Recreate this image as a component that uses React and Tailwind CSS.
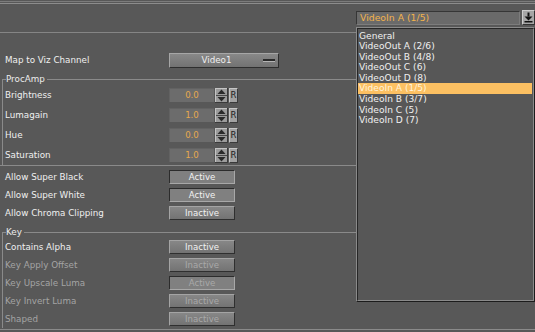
import React from 'react';

const items = [
    'General',
    'VideoOut A (2/6)',
    'VideoOut B (4/8)',
    'VideoOut C (6)',
    'VideoOut D (8)',
    'VideoIn A (1/5)',
    'VideoIn B (3/7)',
    'VideoIn C (5)',
    'VideoIn D (7)',
];

const Label = ({ children, dim, inset }) => (
    <div
        className={`${inset ? 'w-[166px] pl-[2px]' : 'w-[169px] pl-[5px]'} text-[8.75px] leading-none whitespace-nowrap ${
            dim ? 'text-[#a4a4a4]' : 'text-[#f0f0f0]'
        }`}
    >
        {children}
    </div>
);

const Toggle = ({ label, active, disabled }) => {
    const look = active
        ? 'border-t-[#2c2c2c] border-l-[#2c2c2c] border-b-[#a8a8a8] border-r-[#a8a8a8] bg-[#808080]'
        : 'border-t-[#a4a4a4] border-l-[#a4a4a4] border-b-[#2f2f2f] border-r-[#2f2f2f] bg-linear-to-b from-[#878787] to-[#737373]';
    return (
        <div
            className={`w-[66px] h-[14px] flex items-center justify-center border text-[8.6px] leading-none ${look} ${
                disabled ? 'text-[#a9a9a9]' : 'text-[#f2f2f2]'
            }`}
        >
            {label}
        </div>
    );
};

const Spinner = () => (
    <svg width="13" height="15" viewBox="0 0 13 15">
        <rect x="0" y="0" width="13" height="15" fill="#9c9c9c" />
        <rect x="0.5" y="0.5" width="12" height="14" fill="none" stroke="#c4c4c4" />
        <line x1="0" y1="14.5" x2="13" y2="14.5" stroke="#3a3a3a" />
        <line x1="12.5" y1="0" x2="12.5" y2="15" stroke="#3a3a3a" />
        <polygon points="6.5,1.5 2.5,6 10.5,6" fill="#2a2a2a" />
        <line x1="1" y1="7.5" x2="12" y2="7.5" stroke="#4a4a4a" />
        <polygon points="2.5,9 10.5,9 6.5,13.5" fill="#2a2a2a" />
    </svg>
);

const SpinRow = ({ label, value }) => (
    <div className="flex items-center h-[20px]">
        <Label inset>{label}</Label>
        <div className="flex items-center gap-px">
            <div className="w-[45px] h-[14px] bg-[#6c6c6c] border-t border-l border-[#626262] text-[8.6px] leading-[13px] text-center text-[#e6a84c]">
                {value}
            </div>
            <Spinner />
            <div className="w-[9px] h-[15px] bg-[#a2a2a2] border-t border-l border-[#c6c6c6] border-b-[#3a3a3a] border-r border-r-[#3a3a3a] border-b text-[8.5px] leading-[13px] text-center text-[#202020]">
                R
            </div>
        </div>
    </div>
);

const ToggleRow = ({ label, value, active, disabled, inset }) => (
    <div className="flex items-center h-[18px]">
        <Label dim={disabled} inset={inset}>
            {label}
        </Label>
        <Toggle label={value} active={active} disabled={disabled} />
    </div>
);

const Group = ({ title, children }) => (
    <fieldset className="ml-[2px] border-t border-l border-[#8a8a8a]">
        <legend className="ml-[3px] pr-[2px] text-[8.75px] leading-[11px] text-[#ececec]">{title}</legend>
        {children}
    </fieldset>
);

const App = () => {
    return (
        <div className="relative w-[535px] h-[332px] overflow-hidden bg-[#585858] font-['DejaVu_Sans',Verdana,sans-serif] flex flex-col">
            {/* top rules */}
            <div className="h-px mt-px bg-[#7c7c7c]" />
            <div className="h-px mt-px bg-[#8c8c8c]" />

            {/* channel selector */}
            <div className="h-[28px] pt-[6px] flex justify-end items-start gap-[2px]">
                <div className="w-[164px] h-[14px] mt-px bg-[#6a6a6a] border border-t-[#363636] border-l-[#363636] border-b-[#7c7c7c] border-r-[#7c7c7c] pl-[3px] text-[9.3px] leading-[12px] text-[#f2b24c]">
                    VideoIn A (1/5)
                </div>
                <div className="w-[13px] h-[15px] bg-[#a6a6a6] border border-t-[#cdcdcd] border-l-[#cdcdcd] border-b-[#333] border-r-[#333] flex items-center justify-center">
                    <svg width="9" height="11" viewBox="0 0 9 11">
                        <rect x="3.5" y="0.5" width="2" height="4" fill="#111" />
                        <polygon points="0.5,4.5 8.5,4.5 4.5,8.5" fill="#111" />
                        <rect x="0.5" y="9" width="8" height="1.5" fill="#111" />
                    </svg>
                </div>
            </div>
            <div className="h-px bg-[#858585]" />

            {/* map to viz channel */}
            <div className="mt-[20px] h-[15px] flex items-center">
                <Label>Map to Viz Channel</Label>
                <div className="w-[110px] h-[15px] flex items-center border border-t-[#a6a6a6] border-l-[#a6a6a6] border-b-[#2e2e2e] border-r-[#2e2e2e] bg-linear-to-b from-[#888888] to-[#727272]">
                    <span className="flex-1 text-center text-[8.75px] leading-none text-[#efefef]">Video1</span>
                    <span className="w-[12px] h-[3px] mr-[3px] bg-[#2a2a2a] border-b border-[#b4b4b4]" />
                </div>
            </div>

            <div className="mt-[6px]">
                <Group title="ProcAmp">
                    <SpinRow label="Brightness" value="0.0" />
                    <SpinRow label="Lumagain" value="1.0" />
                    <SpinRow label="Hue" value="0.0" />
                    <SpinRow label="Saturation" value="1.0" />
                </Group>
            </div>
            <div className="h-px bg-[#8a8a8a]" />

            <div className="mt-[2px]">
                <ToggleRow label="Allow Super Black" value="Active" active />
                <ToggleRow label="Allow Super White" value="Active" active />
                <ToggleRow label="Allow Chroma Clipping" value="Inactive" />
            </div>

            <div className="mt-[5px]">
                <Group title="Key">
                    <ToggleRow inset label="Contains Alpha" value="Inactive" />
                    <ToggleRow inset label="Key Apply Offset" value="Inactive" disabled />
                    <ToggleRow inset label="Key Upscale Luma" value="Active" active disabled />
                    <ToggleRow inset label="Key Invert Luma" value="Inactive" disabled />
                    <ToggleRow inset label="Shaped" value="Inactive" disabled />
                </Group>
            </div>
            <div className="h-px mt-px bg-[#8a8a8a]" />

            {/* open dropdown list */}
            <div className="absolute left-[356px] top-[27px] w-[179px] h-[275px] border border-t-[#8a8a8a] border-l-[#8a8a8a] border-b-[#1c1c1c] border-r-[#1c1c1c]">
                <div className="h-full bg-[#575757] border border-t-[#262626] border-l-[#262626] border-b-[#8a8a8a] border-r-[#8a8a8a] pt-[1.5px] pr-px">
                    {items.map((item) => (
                        <div
                            key={item}
                            className={`h-[10.6px] pl-px text-[9.1px] leading-[10.6px] whitespace-nowrap ${
                                item === 'VideoIn A (1/5)' ? 'bg-[#fcc062] text-[#fff4dc]' : 'text-[#f0f0f0]'
                            }`}
                        >
                            {item}
                        </div>
                    ))}
                </div>
            </div>
        </div>
    );
};

export default App;
